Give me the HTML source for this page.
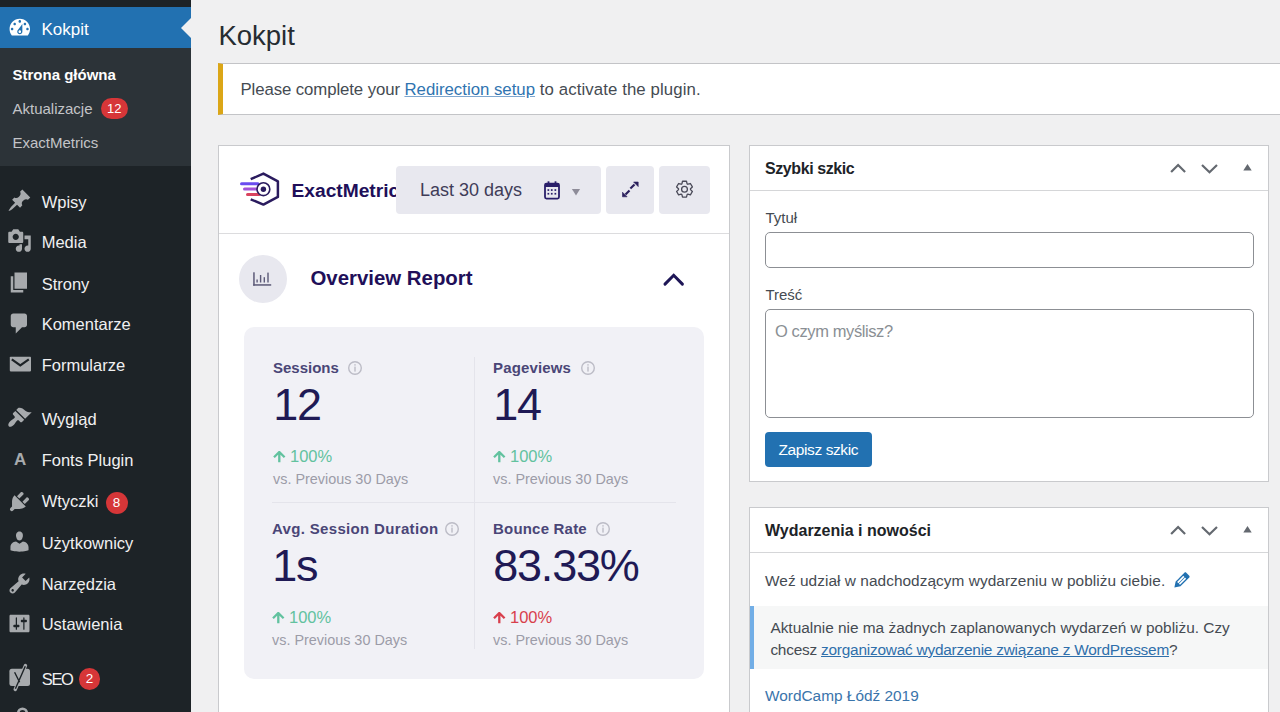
<!DOCTYPE html><html><head><meta charset="utf-8"><style>
html,body{margin:0;padding:0;width:1280px;height:712px;overflow:hidden;background:#f0f0f1;font-family:"Liberation Sans", sans-serif}
.t{position:absolute;white-space:nowrap}
.r{position:absolute}
.badge{background:#d63638;color:#fff;border-radius:11px;text-align:center;font-family:"Liberation Sans", sans-serif}
</style></head><body><div class="r" style="left:0px;top:0px;width:191px;height:712px;background:#1d2327"></div>
<div class="r" style="left:0px;top:7px;width:191px;height:41px;background:#2271b1"></div>
<div class="r" style="left:181px;top:18px;width:0;height:0;border-top:10px solid transparent;border-bottom:10px solid transparent;border-right:10px solid #f0f0f1"></div>
<div class="r" style="left:0px;top:48px;width:191px;height:118px;background:#2c3338"></div>
<svg class="r" style="left:6.8px;top:14.8px" width="25.6" height="25.6" viewBox="0 0 20 20"><path fill="#ffffff" fill-rule="evenodd" d="M3.76 16h12.48c1.1-1.37 1.76-3.11 1.76-5 0-4.42-3.58-8-8-8s-8 3.58-8 8c0 1.89.66 3.63 1.76 5zM10 4c.55 0 1 .45 1 1s-.45 1-1 1-1-.45-1-1 .45-1 1-1zM6 6c.55 0 1 .45 1 1s-.45 1-1 1-1-.45-1-1 .45-1 1-1zm8 0c.55 0 1 .45 1 1s-.45 1-1 1-1-.45-1-1 .45-1 1-1zm-5.37 5.55L12 7v6c0 1.1-.9 2-2 2s-2-.9-2-2c0-.57.24-1.08.63-1.45zM4 10c.55 0 1 .45 1 1s-.45 1-1 1-1-.45-1-1 .45-1 1-1zm12 0c.55 0 1 .45 1 1s-.45 1-1 1-1-.45-1-1 .45-1 1-1zm-5 3c0-.55-.45-1-1-1s-1 .45-1 1 .45 1 1 1 1-.45 1-1z"/></svg>
<div class="t" style="left:41.50px;top:20.61px;font-size:17px;line-height:17px;color:#ffffff;font-weight:400;">Kokpit</div>
<div class="t" style="left:12.50px;top:67.30px;font-size:15px;line-height:15px;color:#ffffff;font-weight:700;">Strona główna</div>
<div class="t" style="left:12.50px;top:101.05px;font-size:15px;line-height:15px;color:#c3c4c7;font-weight:400;">Aktualizacje</div>
<div class="r badge" style="left:101px;top:97.5px;width:26.5px;height:21px;line-height:21px;font-size:13px">12</div>
<div class="t" style="left:12.50px;top:134.80px;font-size:15px;line-height:15px;color:#c3c4c7;font-weight:400;">ExactMetrics</div>
<div class="t" style="left:41.70px;top:194.03px;font-size:16.5px;line-height:16.5px;color:#f0f0f1;font-weight:400;">Wpisy</div>
<svg class="r" style="left:7px;top:188px" width="25.0" height="25.0" viewBox="0 0 20 20"><path fill="#a7aaad" fill-rule="nonzero" d="M10.44 3.02l1.82-1.82 6.36 6.35-1.83 1.82c-1.05-.68-2.48-.57-3.41.36l-.75.75c-.92.93-1.04 2.35-.35 3.41l-1.83 1.82-2.41-2.41-2.8 2.79c-.42.42-3.38 2.71-3.8 2.29s1.86-3.39 2.28-3.81l2.79-2.79L4.1 9.36l1.83-1.82c1.05.69 2.48.57 3.4-.36l.75-.75c.93-.92 1.05-2.35.36-3.41z"/></svg>
<div class="t" style="left:41.70px;top:234.03px;font-size:16.5px;line-height:16.5px;color:#f0f0f1;font-weight:400;">Media</div>
<svg class="r" style="left:7px;top:228px" width="25.0" height="25.0" viewBox="0 0 20 20"><path fill="#a7aaad" fill-rule="nonzero" d="M13 11V4c0-.55-.45-1-1-1h-1.67L9 1H5L3.67 3H2c-.55 0-1 .45-1 1v7c0 .55.45 1 1 1h10c.55 0 1-.45 1-1zM7 4.5c1.38 0 2.5 1.12 2.5 2.5S8.38 9.5 7 9.5 4.5 8.38 4.5 7 5.62 4.5 7 4.5zM14 6h5v10.5c0 1.38-1.12 2.5-2.5 2.5S14 17.88 14 16.5s1.12-2.5 2.5-2.5c.17 0 .34.02.5.05V9h-3V6zm-4 8.05V13h2v3.5c0 1.38-1.12 2.5-2.5 2.5S7 17.88 7 16.5 8.12 14 9.5 14c.17 0 .34.02.5.05z"/></svg>
<div class="t" style="left:41.70px;top:275.53px;font-size:16.5px;line-height:16.5px;color:#f0f0f1;font-weight:400;">Strony</div>
<svg class="r" style="left:7px;top:269.5px" width="25.0" height="25.0" viewBox="0 0 20 20"><path fill="#a7aaad" fill-rule="nonzero" d="M6 15V2h10v13H6zm-1 1h8v2H3V5h2v11z"/></svg>
<div class="t" style="left:41.70px;top:315.53px;font-size:16.5px;line-height:16.5px;color:#f0f0f1;font-weight:400;">Komentarze</div>
<svg class="r" style="left:7px;top:310.9px" width="25.0" height="25.0" viewBox="0 0 20 20"><path fill="#a7aaad" fill-rule="nonzero" d="M5 2h9c1.1 0 2 .9 2 2v7c0 1.1-.9 2-2 2h-2l-5 5v-5H5c-1.1 0-2-.9-2-2V4c0-1.1.9-2 2-2z"/></svg>
<div class="t" style="left:41.70px;top:357.03px;font-size:16.5px;line-height:16.5px;color:#f0f0f1;font-weight:400;">Formularze</div>
<svg class="r" style="left:8px;top:354px" width="26" height="20" viewBox="8 354 26 20"><rect x="9.8" y="356.7" width="21.2" height="14.7" rx="0.8" fill="#a7aaad"/><path d="M11.8 359.4 L20.3 365.3 L28.8 359.4" fill="none" stroke="#1d2327" stroke-width="2.2"/></svg>
<div class="t" style="left:41.70px;top:411.03px;font-size:16.5px;line-height:16.5px;color:#f0f0f1;font-weight:400;">Wygląd</div>
<svg class="r" style="left:7px;top:405px" width="25.0" height="25.0" viewBox="0 0 20 20"><path fill="#a7aaad" fill-rule="nonzero" d="M14.48 11.06L7.41 3.99l1.5-1.5c.5-.56 2.3-.47 3.51.32 1.21.8 1.43 1.28 2.91 2.1 1.18.64 2.45 1.26 4.45.85zm-.71.71L6.7 4.7 4.93 6.47c-.39.39-.39 1.02 0 1.41l1.06 1.06c.39.39.39 1.03 0 1.42-.6.6-1.43 1.11-2.21 1.69-.35.26-.7.53-1.01.84C1.43 14.23.4 16.08 1.4 17.07c.99 1 2.84-.03 4.18-1.36.31-.31.58-.66.85-1.02.57-.78 1.08-1.61 1.69-2.21.39-.39 1.02-.39 1.41 0l1.06 1.06c.39.39 1.02.39 1.41 0z"/></svg>
<div class="t" style="left:41.70px;top:451.63px;font-size:16.5px;line-height:16.5px;color:#f0f0f1;font-weight:400;">Fonts Plugin</div>
<div class="t" style="left:14.00px;top:450.71px;font-size:17px;line-height:17px;color:#a7aaad;font-weight:700;">A</div>
<div class="t" style="left:41.70px;top:493.23px;font-size:16.5px;line-height:16.5px;color:#f0f0f1;font-weight:400;">Wtyczki</div>
<svg class="r" style="left:7px;top:488.59999999999997px" width="25.0" height="25.0" viewBox="0 0 20 20"><path fill="#a7aaad" fill-rule="nonzero" d="M13.11 4.36L9.87 7.6 8 5.73l3.24-3.24c.35-.34 1.05-.2 1.56.32.52.51.66 1.21.31 1.55zm-8 1.77l.91-1.12 9.01 9.01-1.19.84c-.71.71-2.63 1.16-3.82 1.16H6.14L4.9 17.26c-.59.59-1.54.59-2.12 0-.59-.58-.59-1.53 0-2.12l1.24-1.24v-3.88c0-1.13.4-3.19 1.09-3.89zm7.26 3.97l3.24-3.24c.34-.35 1.04-.21 1.55.31.52.51.66 1.21.31 1.55l-3.24 3.25z"/></svg>
<div class="t" style="left:41.70px;top:534.83px;font-size:16.5px;line-height:16.5px;color:#f0f0f1;font-weight:400;">Użytkownicy</div>
<svg class="r" style="left:7px;top:528.8px" width="25.0" height="25.0" viewBox="0 0 20 20"><path fill="#a7aaad" fill-rule="nonzero" d="M10 9.25c-2.27 0-2.73-3.44-2.73-3.44C7 4.02 7.82 2 9.97 2c2.16 0 2.98 2.02 2.71 3.81 0 0-.41 3.44-2.68 3.44zm0 2.57L12.72 10c2.39 0 4.52 2.33 4.52 4.53v2.49s-3.65 1.13-7.24 1.13c-3.65 0-7.24-1.13-7.24-1.13v-2.49c0-2.25 1.94-4.48 4.47-4.48z"/></svg>
<div class="t" style="left:41.70px;top:575.63px;font-size:16.5px;line-height:16.5px;color:#f0f0f1;font-weight:400;">Narzędzia</div>
<svg class="r" style="left:7px;top:571.0px" width="25.0" height="25.0" viewBox="0 0 20 20"><path fill="#a7aaad" fill-rule="nonzero" d="M16.68 9.77c-1.34 1.34-3.3 1.67-4.95.99l-5.41 6.52c-.99.99-2.59.99-3.58 0s-.99-2.59 0-3.57l6.52-5.42c-.68-1.65-.35-3.61.99-4.95 1.28-1.28 3.12-1.62 4.72-1.06l-2.89 2.89 2.82 2.82 2.86-2.87c.53 1.58.18 3.39-1.08 4.65zM3.81 16.21c.4.39 1.04.39 1.43 0 .4-.4.4-1.04 0-1.43-.39-.4-1.03-.4-1.43 0-.39.39-.39 1.03 0 1.43z"/></svg>
<div class="t" style="left:41.70px;top:616.03px;font-size:16.5px;line-height:16.5px;color:#f0f0f1;font-weight:400;">Ustawienia</div>
<svg class="r" style="left:7px;top:611px" width="25.0" height="25.0" viewBox="0 0 20 20"><path fill="#a7aaad" fill-rule="nonzero" d="M18 16V4c0-.55-.45-1-1-1H3c-.55 0-1 .45-1 1v12c0 .55.45 1 1 1h14c.55 0 1-.45 1-1zM8 11h1c.55 0 1 .45 1 1s-.45 1-1 1H8v1.5c0 .28-.22.5-.5.5s-.5-.22-.5-.5V13H6c-.55 0-1-.45-1-1s.45-1 1-1h1V5.5c0-.28.22-.5.5-.5s.5.22.5.5V11zm5-2h-1c-.55 0-1-.45-1-1s.45-1 1-1h1V5.5c0-.28.22-.5.5-.5s.5.22.5.5V7h1c.55 0 1 .45 1 1s-.45 1-1 1h-1v5.5c0 .28-.22.5-.5.5s-.5-.22-.5-.5V9z"/></svg>
<div class="t" style="left:41.70px;top:671.43px;font-size:16.5px;line-height:16.5px;color:#f0f0f1;font-weight:400;letter-spacing:-1.3px">SEO</div>
<svg class="r" style="left:0px;top:660px" width="40" height="36" viewBox="0 660 40 36"><rect x="9.4" y="668.7" width="20.6" height="17.3" rx="2.5" fill="#a7aaad"/><line x1="25.5" y1="665.5" x2="15.2" y2="689.5" stroke="#a7aaad" stroke-width="3.4" stroke-linecap="round"/><path d="M14.6 672.2 L19.6 682.2 M25.3 666.3 L15.4 688.8" fill="none" stroke="#1d2327" stroke-width="1.4"/></svg>
<svg class="r" style="left:10px;top:700px" width="24" height="12" viewBox="10 700 24 12"><path d="M18.2 714 V713 a4.3 4.3 0 0 1 8.6 0 V714" fill="none" stroke="#a7aaad" stroke-width="2.6"/></svg>
<div class="r badge" style="left:105.5px;top:492px;width:22px;height:22px;line-height:22px;font-size:13.5px">8</div>
<div class="r badge" style="left:78.7px;top:668.3px;width:21.5px;height:21.5px;line-height:21.5px;font-size:13.5px">2</div>
<div class="t" style="left:218.40px;top:21.52px;font-size:27.5px;line-height:27.5px;color:#262c32;font-weight:400;">Kokpit</div>
<div class="r" style="left:218px;top:63px;width:1072px;height:52px;background:#fff;border:1px solid #c3c4c7;border-left:5px solid #dba617;box-sizing:border-box"></div>
<div class="t" style="left:240.50px;top:81.98px;font-size:16.8px;line-height:16.8px;color:#454b52;font-weight:400;"><span style="letter-spacing:-0.1px">Please complete your </span><span style="color:#2f74b0;text-decoration:underline;text-decoration-color:#7fa7cf">Redirection setup</span><span style="letter-spacing:0.1px"> to activate the plugin.</span></div>
<div class="r" style="left:218px;top:145px;width:512px;height:615px;background:#fff;border:1px solid #c9cacd;box-sizing:border-box"></div>
<div class="r" style="left:219px;top:233px;width:510px;height:1px;background:#dcdcde"></div>
<svg class="r" style="left:236px;top:168px" width="48" height="42" viewBox="236 168 48 42">
<path d="M250.7 179.2 L263.4 173.6 L277.9 181.3 L277.9 196.9 L263.4 204.6 L250.7 199.3" fill="none" stroke="#2a1b5e" stroke-width="2.5" stroke-linejoin="round"/>
<line x1="241.5" y1="183.8" x2="258" y2="183.8" stroke="#6a4cf0" stroke-width="3" stroke-linecap="round"/>
<line x1="244.5" y1="189" x2="257" y2="189" stroke="#a352d8" stroke-width="3" stroke-linecap="round"/>
<line x1="247.5" y1="194.5" x2="259" y2="194.5" stroke="#d9435e" stroke-width="3" stroke-linecap="round"/>
<circle cx="263.4" cy="189.2" r="6.4" fill="#fff" stroke="#2a1b5e" stroke-width="1.6"/>
<circle cx="263.4" cy="189.2" r="2.7" fill="#2a1b5e"/>
</svg>
<div class="t" style="left:291.50px;top:180.85px;font-size:19.2px;line-height:19.2px;color:#210f59;font-weight:700;">ExactMetrics</div>
<div class="r" style="left:396px;top:166px;width:205px;height:48px;background:#e8e8ef;border-radius:4px"></div>
<div class="r" style="left:606px;top:166px;width:48px;height:48px;background:#e8e8ef;border-radius:4px"></div>
<div class="r" style="left:659px;top:166px;width:51px;height:48px;background:#e8e8ef;border-radius:4px"></div>
<div class="t" style="left:420.00px;top:181.36px;font-size:18px;line-height:18px;color:#3f3c58;font-weight:400;">Last 30 days</div>
<svg class="r" style="left:540px;top:178px" width="24" height="24" viewBox="540 178 24 24">
<rect x="545" y="183.6" width="14" height="15" rx="1.5" fill="none" stroke="#2a1f6a" stroke-width="1.8"/>
<rect x="545" y="183.6" width="14" height="3.4" fill="#2a1f6a"/>
<rect x="547.6" y="181.3" width="1.8" height="3" fill="#2a1f6a"/>
<rect x="554.6" y="181.3" width="1.8" height="3" fill="#2a1f6a"/>
<g fill="#2a1f6a"><rect x="547.5" y="189.2" width="1.7" height="1.7"/><rect x="550.9" y="189.2" width="1.7" height="1.7"/><rect x="554.5" y="189.2" width="1.7" height="1.7"/>
<rect x="547.5" y="192.9" width="1.7" height="1.7"/><rect x="550.9" y="192.9" width="1.7" height="1.7"/><rect x="554.5" y="192.9" width="1.7" height="1.7"/></g>
</svg>
<svg class="r" style="left:570px;top:187px" width="12" height="10" viewBox="570 187 12 10"><path d="M571.9 189.1 L580.1 189.1 L576 195.6Z" fill="#8e8c99"/></svg>
<svg class="r" style="left:616px;top:176px" width="28" height="28" viewBox="616 176 28 28">
<line x1="630.4" y1="188.6" x2="634.5" y2="184.5" stroke="#2a1f5c" stroke-width="2.1"/>
<path d="M638.2 182 L638.2 186.6 L633.6 182Z" fill="#2a1f5c" stroke="#2a1f5c" stroke-width="0.6" stroke-linejoin="round"/>
<line x1="629.5" y1="190.5" x2="625.5" y2="194.5" stroke="#2a1f5c" stroke-width="2.1"/>
<path d="M622.5 196.8 L622.5 192.2 L627.1 196.8Z" fill="#2a1f5c" stroke="#2a1f5c" stroke-width="0.6" stroke-linejoin="round"/>
</svg>
<svg class="r" style="left:670px;top:175px" width="30" height="30" viewBox="670 175 30 30"><path fill="none" stroke="#4a4a58" stroke-width="1.3" stroke-linejoin="round" d="M687.11 183.80 L686.48 181.24 L682.52 181.24 L681.89 183.80 A6.0 6.0 0 0 0 681.13 184.24 L678.60 183.51 L676.62 186.94 L678.52 188.76 A6.0 6.0 0 0 0 678.52 189.64 L676.62 191.46 L678.60 194.89 L681.13 194.16 A6.0 6.0 0 0 0 681.89 194.60 L682.52 197.16 L686.48 197.16 L687.11 194.60 A6.0 6.0 0 0 0 687.87 194.16 L690.40 194.89 L692.38 191.46 L690.48 189.64 A6.0 6.0 0 0 0 690.48 188.76 L692.38 186.94 L690.40 183.51 L687.87 184.24 A6.0 6.0 0 0 0 687.11 183.80 Z"/><circle cx="684.5" cy="189.2" r="2.9" fill="none" stroke="#4a4a58" stroke-width="1.3"/></svg>
<div class="r" style="left:238.8px;top:255.2px;width:47.8px;height:47.8px;border-radius:50%;background:#e8e8ef"></div>
<svg class="r" style="left:250px;top:268px" width="24" height="20" viewBox="250 268 24 20">
<g fill="#5c5a78"><rect x="253.2" y="272.3" width="1.5" height="13.4"/><rect x="253.2" y="284.2" width="18" height="1.5"/>
<rect x="256.4" y="279.5" width="1.4" height="3"/><rect x="259.9" y="275" width="1.4" height="7.5"/><rect x="263.6" y="277.2" width="1.4" height="5.3"/><rect x="267.3" y="272.6" width="1.4" height="9.9"/></g></svg>
<div class="t" style="left:310.50px;top:267.83px;font-size:20.4px;line-height:20.4px;color:#210f59;font-weight:700;">Overview Report</div>
<svg class="r" style="left:660px;top:270px" width="28" height="18" viewBox="660 270 28 18"><path d="M665 284.1 L673.7 275.3 L682.4 284.1" fill="none" stroke="#1e1656" stroke-width="3" stroke-linecap="round" stroke-linejoin="miter"/></svg>
<div class="r" style="left:243.5px;top:327px;width:460.5px;height:351.5px;background:#f1f1f6;border-radius:10px"></div>
<div class="r" style="left:473.5px;top:357px;width:1.0px;height:292px;background:#e4e4eb"></div>
<div class="r" style="left:272px;top:501.5px;width:404px;height:1.0px;background:#e4e4eb"></div>
<div class="t" style="left:273.00px;top:360.30px;font-size:15px;line-height:15px;color:#4a4677;font-weight:700;">Sessions</div>
<svg class="r" style="left:347.1px;top:359.7px" width="16" height="16" viewBox="0 0 16 16"><circle cx="8" cy="8" r="6.3" fill="none" stroke="#bcbcc6" stroke-width="1.4"/><rect x="7.3" y="4.2" width="1.4" height="1.4" fill="#bcbcc6"/><rect x="7.3" y="6.6" width="1.4" height="5" fill="#bcbcc6"/></svg>
<div class="t" style="left:273.20px;top:381.71px;font-size:45px;line-height:45px;color:#1f1a55;font-weight:400;letter-spacing:-1.2px">12</div>
<svg class="r" style="left:272.5px;top:451px" width="13" height="12" viewBox="0 0 13 12"><path d="M1 6.2 L6.3 1 L11.6 6.2 M6.3 1.2 V11.2" fill="none" stroke="#62c29f" stroke-width="2.3"/></svg>
<div class="t" style="left:290.00px;top:447.53px;font-size:16.5px;line-height:16.5px;color:#62c29f;font-weight:400;">100%</div>
<div class="t" style="left:273.00px;top:472.11px;font-size:14.4px;line-height:14.4px;color:#9c9ca8;font-weight:400;">vs. Previous 30 Days</div>
<div class="t" style="left:493.00px;top:360.30px;font-size:15px;line-height:15px;color:#4a4677;font-weight:700;letter-spacing:0.15px">Pageviews</div>
<svg class="r" style="left:579.5px;top:359.7px" width="16" height="16" viewBox="0 0 16 16"><circle cx="8" cy="8" r="6.3" fill="none" stroke="#bcbcc6" stroke-width="1.4"/><rect x="7.3" y="4.2" width="1.4" height="1.4" fill="#bcbcc6"/><rect x="7.3" y="6.6" width="1.4" height="5" fill="#bcbcc6"/></svg>
<div class="t" style="left:493.20px;top:381.71px;font-size:45px;line-height:45px;color:#1f1a55;font-weight:400;letter-spacing:-1.2px">14</div>
<svg class="r" style="left:492.5px;top:451px" width="13" height="12" viewBox="0 0 13 12"><path d="M1 6.2 L6.3 1 L11.6 6.2 M6.3 1.2 V11.2" fill="none" stroke="#62c29f" stroke-width="2.3"/></svg>
<div class="t" style="left:510.00px;top:447.53px;font-size:16.5px;line-height:16.5px;color:#62c29f;font-weight:400;">100%</div>
<div class="t" style="left:493.00px;top:472.11px;font-size:14.4px;line-height:14.4px;color:#9c9ca8;font-weight:400;">vs. Previous 30 Days</div>
<div class="t" style="left:272.00px;top:521.30px;font-size:15px;line-height:15px;color:#4a4677;font-weight:700;letter-spacing:0.33px">Avg. Session Duration</div>
<svg class="r" style="left:444.3px;top:520.7px" width="16" height="16" viewBox="0 0 16 16"><circle cx="8" cy="8" r="6.3" fill="none" stroke="#bcbcc6" stroke-width="1.4"/><rect x="7.3" y="4.2" width="1.4" height="1.4" fill="#bcbcc6"/><rect x="7.3" y="6.6" width="1.4" height="5" fill="#bcbcc6"/></svg>
<div class="t" style="left:272.20px;top:542.71px;font-size:45px;line-height:45px;color:#1f1a55;font-weight:400;letter-spacing:-1.2px">1s</div>
<svg class="r" style="left:271.5px;top:612px" width="13" height="12" viewBox="0 0 13 12"><path d="M1 6.2 L6.3 1 L11.6 6.2 M6.3 1.2 V11.2" fill="none" stroke="#62c29f" stroke-width="2.3"/></svg>
<div class="t" style="left:289.00px;top:608.53px;font-size:16.5px;line-height:16.5px;color:#62c29f;font-weight:400;">100%</div>
<div class="t" style="left:272.00px;top:633.11px;font-size:14.4px;line-height:14.4px;color:#9c9ca8;font-weight:400;">vs. Previous 30 Days</div>
<div class="t" style="left:493.00px;top:521.30px;font-size:15px;line-height:15px;color:#4a4677;font-weight:700;letter-spacing:0.2px">Bounce Rate</div>
<svg class="r" style="left:595px;top:520.7px" width="16" height="16" viewBox="0 0 16 16"><circle cx="8" cy="8" r="6.3" fill="none" stroke="#bcbcc6" stroke-width="1.4"/><rect x="7.3" y="4.2" width="1.4" height="1.4" fill="#bcbcc6"/><rect x="7.3" y="6.6" width="1.4" height="5" fill="#bcbcc6"/></svg>
<div class="t" style="left:493.20px;top:542.71px;font-size:45px;line-height:45px;color:#1f1a55;font-weight:400;letter-spacing:-1.2px">83.33%</div>
<svg class="r" style="left:492.5px;top:612px" width="13" height="12" viewBox="0 0 13 12"><path d="M1 6.2 L6.3 1 L11.6 6.2 M6.3 1.2 V11.2" fill="none" stroke="#d83f4c" stroke-width="2.3"/></svg>
<div class="t" style="left:510.00px;top:608.53px;font-size:16.5px;line-height:16.5px;color:#d83f4c;font-weight:400;">100%</div>
<div class="t" style="left:493.00px;top:633.11px;font-size:14.4px;line-height:14.4px;color:#9c9ca8;font-weight:400;">vs. Previous 30 Days</div>
<div class="r" style="left:749px;top:145px;width:520px;height:337px;background:#fff;border:1px solid #c9cacd;box-sizing:border-box"></div>
<div class="r" style="left:750px;top:190px;width:518px;height:1px;background:#d5d6d8"></div>
<div class="t" style="left:765.00px;top:160.96px;font-size:16px;line-height:16px;color:#1d2327;font-weight:700;letter-spacing:-0.42px">Szybki szkic</div>
<svg class="r" style="left:1165px;top:158px" width="95" height="20" viewBox="1165 158 95 20"><path d="M1171.1 172 L1178.1 165 L1185.1 172" fill="none" stroke="#646970" stroke-width="2.2"/><path d="M1202 165 L1209.5 172.2 L1217 165" fill="none" stroke="#646970" stroke-width="2.2"/><path d="M1243.3 170.6 L1247.5 164 L1251.7 170.6Z" fill="#646970"/></svg>
<div class="t" style="left:765.40px;top:210.10px;font-size:15px;line-height:15px;color:#454b52;font-weight:400;">Tytuł</div>
<div class="r" style="left:765px;top:232px;width:489px;height:36px;background:#fff;border:1px solid #8c8f94;border-radius:5px;box-sizing:border-box"></div>
<div class="t" style="left:765.40px;top:287.20px;font-size:15px;line-height:15px;color:#454b52;font-weight:400;">Treść</div>
<div class="r" style="left:765px;top:309px;width:489px;height:109px;background:#fff;border:1px solid #8c8f94;border-radius:5px;box-sizing:border-box"></div>
<div class="t" style="left:775.00px;top:322.73px;font-size:16.5px;line-height:16.5px;color:#8a8f94;font-weight:400;letter-spacing:-0.4px">O czym myślisz?</div>
<div class="r" style="left:765px;top:432px;width:107px;height:35px;background:#2271b1;border-radius:4px"></div>
<div class="t" style="left:778.50px;top:442.38px;font-size:15.5px;line-height:15.5px;color:#ffffff;font-weight:400;letter-spacing:-0.4px">Zapisz szkic</div>
<div class="r" style="left:749px;top:507px;width:520px;height:253px;background:#fff;border:1px solid #c9cacd;box-sizing:border-box"></div>
<div class="r" style="left:750px;top:552px;width:518px;height:1px;background:#d5d6d8"></div>
<div class="t" style="left:765.00px;top:522.96px;font-size:16px;line-height:16px;color:#1d2327;font-weight:700;">Wydarzenia i nowości</div>
<svg class="r" style="left:1165px;top:520px" width="95" height="20" viewBox="1165 158 95 20"><path d="M1171.1 172 L1178.1 165 L1185.1 172" fill="none" stroke="#646970" stroke-width="2.2"/><path d="M1202 165 L1209.5 172.2 L1217 165" fill="none" stroke="#646970" stroke-width="2.2"/><path d="M1243.3 170.6 L1247.5 164 L1251.7 170.6Z" fill="#646970"/></svg>
<div class="t" style="left:765.00px;top:573.16px;font-size:15.4px;line-height:15.4px;color:#454b52;font-weight:400;letter-spacing:0.05px">Weź udział w nadchodzącym wydarzeniu w pobliżu ciebie.</div>
<svg class="r" style="left:1170.5px;top:569px" width="22" height="22" viewBox="0 0 20 20"><path fill="#2271b1" d="M13.89 3.39l2.71 2.72c.46.46.42 1.24.03 1.64l-8.01 8.02-5.56 1.16 1.16-5.58s7.6-7.63 7.99-8.03c.39-.39 1.22-.39 1.68.07zm-2.73 2.79l-5.59 5.61 1.11 1.11 5.54-5.65zm-2.97 8.23l5.58-5.60-1.07-1.08-5.59 5.60z"/></svg>
<div class="r" style="left:750px;top:606px;width:518px;height:63px;background:#f6f7f7;border-left:4.5px solid #72aee6;box-sizing:border-box"></div>
<div class="t" style="left:770.40px;top:620.46px;font-size:15.4px;line-height:15.4px;color:#454b52;font-weight:400;">Aktualnie nie ma żadnych zaplanowanych wydarzeń w pobliżu. Czy</div>
<div class="t" style="left:770.40px;top:641.56px;font-size:15.4px;line-height:15.4px;color:#454b52;font-weight:400;"><span style="letter-spacing:-0.22px">chcesz <span style="color:#2f6fab;text-decoration:underline">zorganizować wydarzenie związane z WordPressem</span>?</span></div>
<div class="t" style="left:765.00px;top:687.96px;font-size:15.4px;line-height:15.4px;color:#3a74ab;font-weight:400;">WordCamp Łódź 2019</div></body></html>
